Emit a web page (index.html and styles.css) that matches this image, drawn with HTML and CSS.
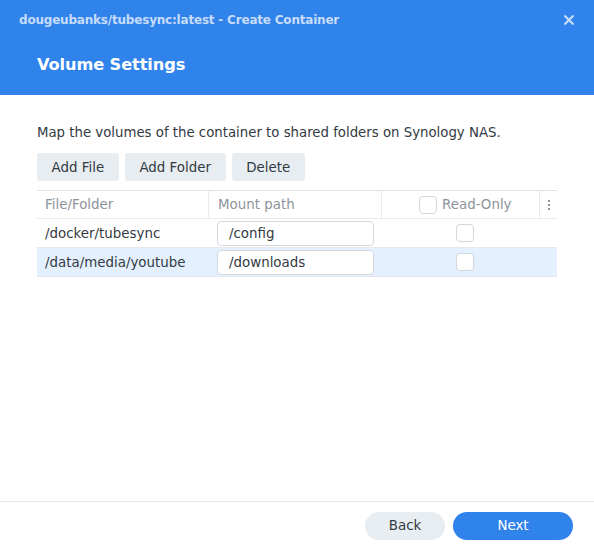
FILE: index.html
```html
<!DOCTYPE html>
<html>
<head>
<meta charset="utf-8">
<link rel="stylesheet" href="styles.css">
</head>
<body>
<div class="dialog">
  <div class="header">
    <div class="titlebar">
      <span class="wintitle">dougeubanks/tubesync:latest - Create Container</span>
      <svg class="close" width="12" height="12" viewBox="0 0 12 12"><path d="M1.5 1.5 L10.5 10.5 M10.5 1.5 L1.5 10.5" stroke="#c6dcf9" stroke-width="2.2" fill="none"/></svg>
    </div>
    <h1 class="section">Volume Settings</h1>
  </div>
  <div class="body">
    <p class="desc">Map the volumes of the container to shared folders on Synology NAS.</p>
    <div class="toolbar">
      <button class="btn">Add File</button>
      <button class="btn">Add Folder</button>
      <button class="btn">Delete</button>
    </div>
    <div class="table">
      <div class="row head">
        <div class="cell c1">File/Folder</div>
        <div class="cell c2">Mount path</div>
        <div class="cell c3"><span class="cb"></span><span>Read-Only</span></div>
        <div class="cell c4"><span class="dots"><i></i><i></i><i></i></span></div>
      </div>
      <div class="row">
        <div class="cell c1">/docker/tubesync</div>
        <div class="cell c2"><div class="input">/config</div></div>
        <div class="cell c3 center"><span class="cb"></span></div>
        <div class="cell c4"></div>
      </div>
      <div class="row sel">
        <div class="cell c1">/data/media/youtube</div>
        <div class="cell c2"><div class="input">/downloads</div></div>
        <div class="cell c3 center"><span class="cb"></span></div>
        <div class="cell c4"></div>
      </div>
    </div>
  </div>
  <div class="footer">
    <button class="pill back">Back</button>
    <button class="pill next">Next</button>
  </div>
</div>
</body>
</html>
```
FILE: styles.css
```css
* { box-sizing: border-box; }
html, body { margin: 0; padding: 0; }
body {
  width: 594px;
  height: 547px;
  background: #fff;
  font-family: "DejaVu Sans", Verdana, sans-serif;
  font-size: 13.4px;
  color: #333a42;
  overflow: hidden;
}
.dialog { display: flex; flex-direction: column; height: 547px; }
.header {
  background: #3183ec;
  height: 95px;
  padding: 0 0 0 19px;
}
.titlebar {
  display: flex;
  align-items: center;
  justify-content: space-between;
  height: 38px;
  padding-top: 1px;
  padding-right: 19px;
}
.wintitle {
  color: #c6dcf9;
  font-weight: bold;
  font-size: 12px;
  letter-spacing: -0.2px;
}
.close { display: block; }
.section {
  margin: 0;
  padding-left: 18px;
  color: #fff;
  font-size: 16.2px;
  font-weight: bold;
  line-height: 54px;
  letter-spacing: -0.1px;
}
.body { flex: 1; padding: 0 37px; }
.desc {
  margin: 0;
  padding-top: 29px;
  line-height: 18px;
  font-size: 13.3px;
}
.toolbar { display: flex; gap: 6px; margin-top: 11px; }
.btn {
  height: 28px;
  border: none;
  border-radius: 3px;
  background: #e8edf2;
  font-family: inherit;
  font-size: 13.4px;
  color: #333a42;
  padding: 0 14.6px;
}
.table {
  margin-top: 9px;
  width: 520px;
  border-top: 1px solid #dce4ee;
}
.row {
  display: flex;
  height: 29px;
  border-bottom: 1px solid #e5e8ec;
}
.row.head { height: 28px; border-bottom-color: #e8ebee; }
.row.sel { background: #e4f0fd; }
.cell {
  display: flex;
  align-items: center;
  padding-left: 8px;
  font-size: 13.4px;
}
.head .cell { color: #8d939b; border-right: 1px solid #e8ebee; }
.head .cell.c4 { border-right: none; }
.c1 { width: 172px; }
.c2 { width: 173px; }
.c3 { width: 158px; }
.c4 { flex: 1; padding-left: 0; justify-content: center; }
.head .c3 { padding-left: 37px; gap: 5px; }
.c3.center { justify-content: center; padding-left: 8px; }
.cb {
  display: inline-block;
  width: 18px;
  height: 18px;
  border: 1px solid #d2d7dd;
  border-radius: 4px;
  background: #fff;
}
.dots { display: flex; flex-direction: column; gap: 2px; }
.dots i { display: block; width: 2px; height: 2px; background: #8d939b; }
.input {
  width: 157px;
  height: 25px;
  border: 1px solid #d4d9df;
  border-radius: 4px;
  background: #fff;
  display: flex;
  align-items: center;
  padding-left: 11px;
  color: #333a42;
}
.c2 { padding-left: 8px; }
.head .c2 { padding-left: 9px; }
.footer {
  height: 46px;
  border-top: 1px solid #e3e6ea;
  display: flex;
  justify-content: flex-end;
  align-items: center;
  gap: 8px;
  padding-right: 21px;
  padding-top: 2px;
}
.pill {
  height: 28px;
  border: none;
  border-radius: 14px;
  font-family: inherit;
  font-size: 13.4px;
}
.back { width: 80px; background: #e8edf2; color: #333a42; }
.next { width: 120px; background: #3183ec; color: #fff; }
```
